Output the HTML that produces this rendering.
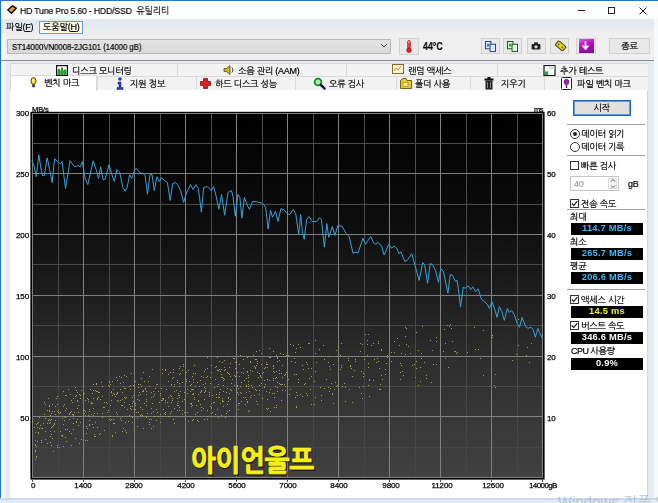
<!DOCTYPE html>
<html lang="ko"><head><meta charset="utf-8"><title>HD Tune Pro 5.60 - HDD/SSD 유틸리티</title>
<style>
*{box-sizing:border-box;margin:0;padding:0}
html,body{width:658px;height:503px;overflow:hidden;background:#efefef}
body{position:relative;font-family:"Liberation Sans","NanumGothic","Noto Sans CJK KR",sans-serif;font-size:9px;color:#000;line-height:1}
.a{position:absolute;white-space:nowrap}
.t{position:absolute;will-change:transform;white-space:nowrap;line-height:12px;height:12px;letter-spacing:-.25px;-webkit-text-stroke-width:.2px}
.btn{position:absolute;background:#e8e8e8;border:1px solid #d0d0d0}
.vb{will-change:transform;position:absolute;left:570.5px;width:72px;height:12px;background:#000;text-align:center;font-weight:bold;font-size:9.3px;line-height:10.4px;letter-spacing:.25px}
.sep{position:absolute;left:567px;width:78px;height:1px;background:#a0a0a0}
.cb{position:absolute;left:570px;width:9px;height:9px;border:1px solid #333;background:#fff}
.ax{position:absolute;font-size:8px;line-height:10px;height:10px;white-space:nowrap;letter-spacing:-.1px;will-change:transform;-webkit-text-stroke-width:.25px}
.tab{position:absolute;height:14px;background:#f2f2f2;border-left:1px solid #d9d9d9;border-top:1px solid #d9d9d9;font-size:9px;line-height:13px;white-space:nowrap}
</style></head><body>
<!-- title bar -->
<div class="a" style="left:0;top:0;width:658px;height:19px;background:#fff;border-top:1px solid #2a78c8"></div>
<svg class="a" style="left:7px;top:5px" width="10" height="9" viewBox="0 0 10 9"><path d="M0.8 5 L5.5 0.8 L9.2 3.2 L4.5 8.2 Z" fill="#e0a030" stroke="#111" stroke-width="1.5" stroke-linejoin="round"/></svg>
<div class="t" style="left:20px;top:5px;font-size:9.5px;letter-spacing:0;transform:scaleX(.915);transform-origin:0 0"><span style="letter-spacing:-.2px">HD Tune Pro 5.60 - HDD/SSD</span>&nbsp; 유틸리티</div>
<div class="a" style="left:578px;top:10px;width:7px;height:1px;background:#222"></div>
<div class="a" style="left:608px;top:7px;width:7px;height:7px;border:1px solid #222"></div>
<svg class="a" style="left:639px;top:7px" width="8" height="8" viewBox="0 0 8 8"><path d="M0.5 0.5 L7.5 7.5 M7.5 0.5 L0.5 7.5" stroke="#222" stroke-width="1" fill="none"/></svg>
<!-- menu bar -->
<div class="a" style="left:0;top:18px;width:658px;height:17px;background:linear-gradient(#fff 0,#e2e6f0 2px,#e6e9f0 8px,#efefef 17px)"></div>
<div class="t" style="left:6px;top:21px">파일(<u>F</u>)</div>
<div class="a" style="left:38.5px;top:21px;width:44.5px;height:13px;background:#fbf7e8;border:1px solid #6a9ccc"></div>
<div class="t" style="left:43px;top:21px">도움말(<u>H</u>)</div>
<!-- toolbar -->
<div class="a" style="left:7px;top:39px;width:384px;height:15px;background:linear-gradient(#e3e3e3,#d9d9d9);border:1px solid #b8b8b8"></div>
<div class="t" style="left:12px;top:40.5px;font-size:8.5px;letter-spacing:0;transform:scaleX(.91);transform-origin:0 0">ST14000VN0008-2JG101 (14000 gB)</div>
<svg class="a" style="left:380px;top:43px" width="8" height="6" viewBox="0 0 8 6"><path d="M1 1 L4 4 L7 1" stroke="#444" stroke-width="1" fill="none"/></svg>
<div class="btn" style="left:399px;top:38px;width:20px;height:17px"></div>
<svg class="a" style="left:405px;top:39.5px" width="8" height="13" viewBox="0 0 8 13"><rect x="2.6" y="0.5" width="2.8" height="9" rx="1.4" fill="#f0a0a0" stroke="#b01818" stroke-width=".8"/><rect x="3.4" y="3" width="1.2" height="7" fill="#d01010"/><circle cx="4" cy="10.3" r="2.3" fill="#e02020" stroke="#900" stroke-width=".6"/></svg>
<div class="t" style="left:423px;top:40.7px;font-weight:bold;font-size:10.2px;letter-spacing:0;transform:scaleX(.86);transform-origin:0 0">44°C</div>
<div class="btn" style="left:481px;top:38px;width:19px;height:16px"></div>
<div class="btn" style="left:503px;top:38px;width:19px;height:16px"></div>
<div class="btn" style="left:527px;top:38px;width:19px;height:16px"></div>
<div class="btn" style="left:550px;top:38px;width:19px;height:16px"></div>
<div class="btn" style="left:576px;top:38px;width:20px;height:16px"></div>
<div class="btn" style="left:609px;top:38px;width:41px;height:16px"></div>
<div class="t" style="left:609px;top:40px;width:41px;text-align:center">종료</div>
<!-- toolbar icons -->
<svg class="a" style="left:485px;top:41px" width="11" height="11" viewBox="0 0 12 12"><rect x="0.5" y="0.5" width="6" height="8" fill="#dfeaff" stroke="#1a3a78"/><rect x="5.5" y="3.5" width="6" height="8" fill="#dfeaff" stroke="#1a3a78"/><rect x="2" y="3" width="3" height="3" fill="#3a78d0"/></svg>
<svg class="a" style="left:507px;top:41px" width="11" height="11" viewBox="0 0 12 12"><rect x="0.5" y="0.5" width="6" height="8" fill="#dff5df" stroke="#1a4a1a"/><rect x="5.5" y="3.5" width="6" height="8" fill="#dff5df" stroke="#1a4a1a"/><rect x="2" y="3" width="3" height="3" fill="#3aa040"/></svg>
<svg class="a" style="left:531px;top:42px" width="10" height="8" viewBox="0 0 12 10"><rect x="0.5" y="2.5" width="11" height="7" rx="1" fill="#222"/><rect x="3.5" y="0.5" width="5" height="3" fill="#222"/><circle cx="6" cy="6" r="2" fill="#ddd"/></svg>
<svg class="a" style="left:553.5px;top:40px" width="13" height="12" viewBox="0 0 13 12"><rect x="1.5" y="3" width="10" height="5.6" rx="1.4" transform="rotate(40 6.5 6)" fill="#dcd428" stroke="#4a4608" stroke-width="1"/><circle cx="4.6" cy="4.4" r="1" fill="#7a7410"/><circle cx="8.4" cy="7.6" r="1" fill="#7a7410"/></svg>
<div class="a" style="left:579px;top:39px;width:15px;height:14px;background:linear-gradient(160deg,#d860d8 0,#b010b8 45%,#7a0a90 100%)"></div>
<svg class="a" style="left:581px;top:41px" width="9" height="10" viewBox="0 0 10 12"><path d="M5 0.5 V8.5 M1.5 5.5 L5 9.5 L8.5 5.5" stroke="#fff" stroke-width="2" fill="none"/></svg>
<!-- tab control -->
<div class="a" style="left:4.5px;top:60px;width:649.5px;height:440px;background:#e6ebf2"></div>
<div class="a" style="left:0;top:0;width:1px;height:503px;background:#1f74c8"></div>
<div class="a" style="left:1px;top:34px;width:3.5px;height:465px;background:#fcf9f8"></div>
<div class="a" style="left:1px;top:60px;width:656px;height:1px;background:#8c8c8c"></div>
<!-- tab rows -->
<div class="tab" style="left:10px;top:63px;width:167px;height:13px"></div>
<div class="tab" style="left:177px;top:63px;width:169px;height:13px"></div>
<div class="tab" style="left:346px;top:63px;width:151px;height:13px"></div>
<div class="tab" style="left:497px;top:63px;width:153px;height:13px;border-right:1px solid #d9d9d9"></div>
<div class="tab" style="left:97px;top:76px;width:99px"></div>
<div class="tab" style="left:196px;top:76px;width:99px"></div>
<div class="tab" style="left:295px;top:76px;width:101px"></div>
<div class="tab" style="left:396px;top:76px;width:74px"></div>
<div class="tab" style="left:470px;top:76px;width:74px"></div>
<div class="tab" style="left:544px;top:76px;width:106px;border-right:1px solid #d9d9d9"></div>
<!-- content panel -->
<div class="a" style="left:10px;top:90px;width:638px;height:409px;background:#fff;border-right:1px solid #d4d8dc"></div>
<div class="a" style="left:10px;top:75px;width:87px;height:16px;background:#fff;border-left:1px solid #d9d9d9;border-top:1px solid #d9d9d9;border-right:1px solid #d9d9d9"></div>
<!-- tab labels row1 -->
<div class="t" style="left:72px;top:65px">디스크 모니터링</div>
<div class="t" style="left:238px;top:65px">소음 관리 (AAM)</div>
<div class="t" style="left:408px;top:65px">랜덤 액세스</div>
<div class="t" style="left:560px;top:65px">추가 테스트</div>
<!-- tab labels row2 -->
<div class="t" style="left:44px;top:77px">벤치 마크</div>
<div class="t" style="left:130px;top:78px">지원 정보</div>
<div class="t" style="left:215px;top:78px">하드 디스크 성능</div>
<div class="t" style="left:329px;top:78px">오류 검사</div>
<div class="t" style="left:415px;top:78px">폴더 사용</div>
<div class="t" style="left:501px;top:78px">지우기</div>
<div class="t" style="left:577px;top:78px">파일 벤치 마크</div>
<!-- tab icons -->
<svg class="a" style="left:56px;top:64.5px" width="12" height="11" viewBox="0 0 12 11"><rect x="0.6" y="0.6" width="10.8" height="9.8" fill="#f4fff4" stroke="#111" stroke-width="1.2"/><rect x="1.4" y="5.5" width="9.2" height="4.3" fill="#38b048"/><rect x="2" y="4" width="2" height="5.8" fill="#2a9a38"/><rect x="5" y="2.5" width="2" height="7.3" fill="#2a9a38"/><rect x="8" y="4.5" width="2" height="5.3" fill="#2a9a38"/></svg>
<svg class="a" style="left:223px;top:65px" width="12" height="10" viewBox="0 0 12 10"><path d="M1 3.5 H3.5 L7 0.5 V9.5 L3.5 6.5 H1 Z" fill="#d8b020" stroke="#5a4a10" stroke-width=".8"/><path d="M9 2.5 Q11 5 9 7.5" stroke="#444" fill="none"/></svg>
<svg class="a" style="left:392px;top:64px" width="12" height="10" viewBox="0 0 12 10"><rect x="0.5" y="0.5" width="11" height="9" fill="#fff8e0" stroke="#8a6a20"/><path d="M2 7 L4 4 L6 6 L9 2" stroke="#d08020" fill="none"/></svg>
<svg class="a" style="left:542.5px;top:65px" width="13" height="11" viewBox="0 0 13 12"><rect x="0.5" y="0.5" width="12" height="11" fill="#fff" stroke="#111" stroke-width="1.3"/><rect x="1" y="7" width="4" height="4" fill="#2aa040"/><rect x="6" y="1" width="6" height="4" fill="#ddd"/></svg>
<svg class="a" style="left:30px;top:77px" width="7" height="11" viewBox="0 0 7 11"><ellipse cx="3.5" cy="4" rx="2.5" ry="3.4" fill="#f4e428" stroke="#4a4000" stroke-width="1"/><ellipse cx="3" cy="3.2" rx=".9" ry="1.3" fill="#fffbd0"/><rect x="2.3" y="7.4" width="2.4" height="2.8" fill="#222"/></svg>
<svg class="a" style="left:116px;top:77px" width="8" height="13" viewBox="0 0 8 13"><circle cx="4" cy="2" r="1.8" fill="#2040c0"/><path d="M2 5 H5 V10.5 H7 V12.5 H1 V10.5 H3 V7 H2 Z" fill="#2040c0" stroke="#102070" stroke-width=".5"/></svg>
<svg class="a" style="left:200px;top:78px" width="11" height="11" viewBox="0 0 11 11"><path d="M3.5 0.5 H7.5 V3.5 H10.5 V7.5 H7.5 V10.5 H3.5 V7.5 H0.5 V3.5 H3.5 Z" fill="#e02020" stroke="#801010" stroke-width=".8"/></svg>
<svg class="a" style="left:312.5px;top:77px" width="13" height="13" viewBox="0 0 13 13"><circle cx="5" cy="5" r="3.4" fill="#a8f0a8" stroke="#1a8a2a" stroke-width="1.8"/><path d="M7.8 7.8 L11.6 11.6" stroke="#141450" stroke-width="2.4" stroke-linecap="round"/></svg>
<svg class="a" style="left:400px;top:78px" width="12" height="11" viewBox="0 0 12 11"><path d="M0.5 2.5 L3 0.5 H6 L7 2.5 H11.5 V10.5 H0.5 Z" fill="#e8c830" stroke="#6a5410" stroke-width=".9"/><rect x="3" y="4.5" width="5" height="4" fill="#f8e890" stroke="#8a7420" stroke-width=".5"/></svg>
<svg class="a" style="left:484px;top:77px" width="10" height="13" viewBox="0 0 10 13"><rect x="0.5" y="1.5" width="9" height="2" fill="#111"/><rect x="3.5" y="0" width="3" height="2" fill="#111"/><rect x="1.5" y="3.5" width="7" height="9" fill="#222"/><path d="M3.5 5 V11 M6.5 5 V11" stroke="#999" stroke-width=".8"/></svg>
<svg class="a" style="left:561px;top:77px" width="11" height="13" viewBox="0 0 11 13"><rect x="0.5" y="0.5" width="10" height="12" rx="1" fill="#fff" stroke="#222"/><ellipse cx="5.5" cy="5" rx="2.4" ry="2.8" fill="#a020c0" stroke="#400860" stroke-width=".6"/><path d="M5.5 8 V11" stroke="#333" stroke-width="1.4"/></svg>
<!-- chart -->
<svg class="a" style="left:30px;top:111px" width="515" height="369" viewBox="0 0 515 369">
<defs><linearGradient id="g" x1="0" y1="0" x2="0" y2="1"><stop offset="0" stop-color="#000"/><stop offset="0.3" stop-color="#0d0d0d"/><stop offset="0.7" stop-color="#2f2f2f"/><stop offset="1" stop-color="#414141"/></linearGradient>
<linearGradient id="gm" x1="0" y1="0" x2="0" y2="1"><stop offset="0" stop-color="#4e4e4e"/><stop offset="1" stop-color="#454545"/></linearGradient></defs>
<rect x="0.4" y="0.8" width="514.2" height="367.8" fill="#000"/><rect x="2.5" y="2.0" width="510.3" height="364.6" fill="url(#g)"/>
<g stroke-width="1"><g><rect x="28.00" y="2.0" width="1" height="364.6" fill="url(#gm)"/><rect x="79.00" y="2.0" width="1" height="364.6" fill="url(#gm)"/><rect x="130.00" y="2.0" width="1" height="364.6" fill="url(#gm)"/><rect x="181.00" y="2.0" width="1" height="364.6" fill="url(#gm)"/><rect x="232.00" y="2.0" width="1" height="364.6" fill="url(#gm)"/><rect x="283.00" y="2.0" width="1" height="364.6" fill="url(#gm)"/><rect x="334.00" y="2.0" width="1" height="364.6" fill="url(#gm)"/><rect x="385.00" y="2.0" width="1" height="364.6" fill="url(#gm)"/><rect x="436.00" y="2.0" width="1" height="364.6" fill="url(#gm)"/><rect x="487.00" y="2.0" width="1" height="364.6" fill="url(#gm)"/><line x1="2.5" y1="32.50" x2="512.8" y2="32.50" stroke="#4d4d4d"/><line x1="2.5" y1="93.50" x2="512.8" y2="93.50" stroke="#4b4b4b"/><line x1="2.5" y1="153.50" x2="512.8" y2="153.50" stroke="#4a4a4a"/><line x1="2.5" y1="214.50" x2="512.8" y2="214.50" stroke="#484848"/><line x1="2.5" y1="275.50" x2="512.8" y2="275.50" stroke="#474747"/><line x1="2.5" y1="336.50" x2="512.8" y2="336.50" stroke="#454545"/></g><g stroke="#808080"><line x1="2.50" y1="2.0" x2="2.50" y2="366.6"/><line x1="53.50" y1="2.0" x2="53.50" y2="366.6"/><line x1="104.50" y1="2.0" x2="104.50" y2="366.6"/><line x1="155.50" y1="2.0" x2="155.50" y2="366.6"/><line x1="206.50" y1="2.0" x2="206.50" y2="366.6"/><line x1="257.50" y1="2.0" x2="257.50" y2="366.6"/><line x1="308.50" y1="2.0" x2="308.50" y2="366.6"/><line x1="359.50" y1="2.0" x2="359.50" y2="366.6"/><line x1="410.50" y1="2.0" x2="410.50" y2="366.6"/><line x1="461.50" y1="2.0" x2="461.50" y2="366.6"/><line x1="512.50" y1="2.0" x2="512.50" y2="366.6"/><line x1="2.5" y1="2.50" x2="512.8" y2="2.50"/><line x1="2.5" y1="62.50" x2="512.8" y2="62.50"/><line x1="2.5" y1="123.50" x2="512.8" y2="123.50"/><line x1="2.5" y1="184.50" x2="512.8" y2="184.50"/><line x1="2.5" y1="245.50" x2="512.8" y2="245.50"/><line x1="2.5" y1="305.50" x2="512.8" y2="305.50"/><line x1="2.5" y1="366.50" x2="512.8" y2="366.50"/></g></g>
<g fill="#b0a84a" opacity=".9"><rect x="119" y="313" width="1" height="1"/><rect x="122" y="292" width="1" height="1"/><rect x="50" y="311" width="1" height="1"/><rect x="207" y="261" width="1" height="1"/><rect x="25" y="303" width="1" height="1"/><rect x="255" y="275" width="1" height="1"/><rect x="43" y="307" width="1" height="1"/><rect x="17" y="299" width="1" height="1"/><rect x="10" y="314" width="1" height="1"/><rect x="219" y="280" width="1" height="1"/><rect x="131" y="277" width="1" height="1"/><rect x="259" y="283" width="1" height="1"/><rect x="83" y="282" width="1" height="1"/><rect x="20" y="320" width="1" height="1"/><rect x="102" y="286" width="1" height="1"/><rect x="56" y="315" width="1" height="1"/><rect x="105" y="298" width="1" height="1"/><rect x="203" y="247" width="1" height="1"/><rect x="88" y="290" width="1" height="1"/><rect x="66" y="273" width="1" height="1"/><rect x="208" y="277" width="1" height="1"/><rect x="117" y="302" width="1" height="1"/><rect x="36" y="284" width="1" height="1"/><rect x="111" y="275" width="1" height="1"/><rect x="252" y="273" width="1" height="1"/><rect x="56" y="322" width="1" height="1"/><rect x="168" y="310" width="1" height="1"/><rect x="57" y="317" width="1" height="1"/><rect x="87" y="269" width="1" height="1"/><rect x="25" y="295" width="1" height="1"/><rect x="157" y="278" width="1" height="1"/><rect x="249" y="272" width="1" height="1"/><rect x="226" y="248" width="1" height="1"/><rect x="236" y="251" width="1" height="1"/><rect x="193" y="280" width="1" height="1"/><rect x="230" y="265" width="1" height="1"/><rect x="29" y="336" width="1" height="1"/><rect x="64" y="302" width="1" height="1"/><rect x="156" y="261" width="1" height="1"/><rect x="188" y="259" width="1" height="1"/><rect x="146" y="279" width="1" height="1"/><rect x="239" y="237" width="1" height="1"/><rect x="71" y="271" width="1" height="1"/><rect x="47" y="308" width="1" height="1"/><rect x="36" y="330" width="1" height="1"/><rect x="255" y="275" width="1" height="1"/><rect x="38" y="278" width="1" height="1"/><rect x="237" y="268" width="1" height="1"/><rect x="166" y="294" width="1" height="1"/><rect x="84" y="283" width="1" height="1"/><rect x="192" y="289" width="1" height="1"/><rect x="207" y="274" width="1" height="1"/><rect x="234" y="276" width="1" height="1"/><rect x="225" y="278" width="1" height="1"/><rect x="101" y="298" width="1" height="1"/><rect x="23" y="340" width="1" height="1"/><rect x="229" y="274" width="1" height="1"/><rect x="152" y="303" width="1" height="1"/><rect x="24" y="300" width="1" height="1"/><rect x="126" y="298" width="1" height="1"/><rect x="130" y="311" width="1" height="1"/><rect x="68" y="286" width="1" height="1"/><rect x="177" y="257" width="1" height="1"/><rect x="236" y="280" width="1" height="1"/><rect x="86" y="283" width="1" height="1"/><rect x="210" y="281" width="1" height="1"/><rect x="152" y="259" width="1" height="1"/><rect x="130" y="303" width="1" height="1"/><rect x="247" y="246" width="1" height="1"/><rect x="118" y="270" width="1" height="1"/><rect x="109" y="289" width="1" height="1"/><rect x="83" y="308" width="1" height="1"/><rect x="21" y="334" width="1" height="1"/><rect x="13" y="312" width="1" height="1"/><rect x="206" y="250" width="1" height="1"/><rect x="119" y="308" width="1" height="1"/><rect x="63" y="273" width="1" height="1"/><rect x="164" y="288" width="1" height="1"/><rect x="171" y="299" width="1" height="1"/><rect x="53" y="283" width="1" height="1"/><rect x="5" y="334" width="1" height="1"/><rect x="48" y="294" width="1" height="1"/><rect x="182" y="284" width="1" height="1"/><rect x="197" y="293" width="1" height="1"/><rect x="236" y="297" width="1" height="1"/><rect x="188" y="273" width="1" height="1"/><rect x="163" y="278" width="1" height="1"/><rect x="229" y="283" width="1" height="1"/><rect x="170" y="293" width="1" height="1"/><rect x="213" y="286" width="1" height="1"/><rect x="57" y="329" width="1" height="1"/><rect x="141" y="291" width="1" height="1"/><rect x="223" y="244" width="1" height="1"/><rect x="116" y="305" width="1" height="1"/><rect x="128" y="305" width="1" height="1"/><rect x="19" y="299" width="1" height="1"/><rect x="205" y="251" width="1" height="1"/><rect x="135" y="301" width="1" height="1"/><rect x="246" y="296" width="1" height="1"/><rect x="24" y="312" width="1" height="1"/><rect x="77" y="301" width="1" height="1"/><rect x="220" y="259" width="1" height="1"/><rect x="100" y="295" width="1" height="1"/><rect x="221" y="274" width="1" height="1"/><rect x="54" y="302" width="1" height="1"/><rect x="158" y="310" width="1" height="1"/><rect x="135" y="303" width="1" height="1"/><rect x="147" y="294" width="1" height="1"/><rect x="19" y="308" width="1" height="1"/><rect x="249" y="259" width="1" height="1"/><rect x="35" y="326" width="1" height="1"/><rect x="234" y="257" width="1" height="1"/><rect x="51" y="328" width="1" height="1"/><rect x="35" y="284" width="1" height="1"/><rect x="61" y="291" width="1" height="1"/><rect x="162" y="294" width="1" height="1"/><rect x="34" y="293" width="1" height="1"/><rect x="53" y="298" width="1" height="1"/><rect x="99" y="293" width="1" height="1"/><rect x="43" y="312" width="1" height="1"/><rect x="167" y="301" width="1" height="1"/><rect x="160" y="280" width="1" height="1"/><rect x="211" y="261" width="1" height="1"/><rect x="240" y="300" width="1" height="1"/><rect x="231" y="253" width="1" height="1"/><rect x="189" y="250" width="1" height="1"/><rect x="217" y="290" width="1" height="1"/><rect x="35" y="318" width="1" height="1"/><rect x="7" y="330" width="1" height="1"/><rect x="237" y="256" width="1" height="1"/><rect x="198" y="286" width="1" height="1"/><rect x="51" y="279" width="1" height="1"/><rect x="12" y="317" width="1" height="1"/><rect x="149" y="263" width="1" height="1"/><rect x="55" y="329" width="1" height="1"/><rect x="27" y="336" width="1" height="1"/><rect x="121" y="281" width="1" height="1"/><rect x="135" y="291" width="1" height="1"/><rect x="5" y="321" width="1" height="1"/><rect x="119" y="275" width="1" height="1"/><rect x="45" y="276" width="1" height="1"/><rect x="232" y="287" width="1" height="1"/><rect x="164" y="286" width="1" height="1"/><rect x="132" y="287" width="1" height="1"/><rect x="237" y="288" width="1" height="1"/><rect x="107" y="307" width="1" height="1"/><rect x="200" y="278" width="1" height="1"/><rect x="20" y="311" width="1" height="1"/><rect x="5" y="329" width="1" height="1"/><rect x="163" y="308" width="1" height="1"/><rect x="174" y="288" width="1" height="1"/><rect x="149" y="275" width="1" height="1"/><rect x="260" y="278" width="1" height="1"/><rect x="199" y="263" width="1" height="1"/><rect x="193" y="269" width="1" height="1"/><rect x="15" y="307" width="1" height="1"/><rect x="27" y="334" width="1" height="1"/><rect x="144" y="312" width="1" height="1"/><rect x="149" y="296" width="1" height="1"/><rect x="22" y="327" width="1" height="1"/><rect x="14" y="305" width="1" height="1"/><rect x="46" y="311" width="1" height="1"/><rect x="17" y="312" width="1" height="1"/><rect x="156" y="268" width="1" height="1"/><rect x="171" y="265" width="1" height="1"/><rect x="187" y="246" width="1" height="1"/><rect x="65" y="279" width="1" height="1"/><rect x="197" y="300" width="1" height="1"/><rect x="195" y="306" width="1" height="1"/><rect x="246" y="294" width="1" height="1"/><rect x="113" y="317" width="1" height="1"/><rect x="65" y="325" width="1" height="1"/><rect x="188" y="306" width="1" height="1"/><rect x="213" y="248" width="1" height="1"/><rect x="163" y="262" width="1" height="1"/><rect x="15" y="293" width="1" height="1"/><rect x="116" y="280" width="1" height="1"/><rect x="152" y="299" width="1" height="1"/><rect x="139" y="305" width="1" height="1"/><rect x="64" y="323" width="1" height="1"/><rect x="204" y="264" width="1" height="1"/><rect x="72" y="302" width="1" height="1"/><rect x="165" y="262" width="1" height="1"/><rect x="255" y="263" width="1" height="1"/><rect x="18" y="309" width="1" height="1"/><rect x="163" y="283" width="1" height="1"/><rect x="21" y="323" width="1" height="1"/><rect x="144" y="275" width="1" height="1"/><rect x="125" y="277" width="1" height="1"/><rect x="194" y="249" width="1" height="1"/><rect x="211" y="290" width="1" height="1"/><rect x="57" y="287" width="1" height="1"/><rect x="211" y="282" width="1" height="1"/><rect x="257" y="269" width="1" height="1"/><rect x="194" y="268" width="1" height="1"/><rect x="27" y="285" width="1" height="1"/><rect x="148" y="294" width="1" height="1"/><rect x="79" y="275" width="1" height="1"/><rect x="173" y="266" width="1" height="1"/><rect x="189" y="258" width="1" height="1"/><rect x="94" y="277" width="1" height="1"/><rect x="185" y="303" width="1" height="1"/><rect x="245" y="275" width="1" height="1"/><rect x="81" y="289" width="1" height="1"/><rect x="243" y="255" width="1" height="1"/><rect x="96" y="286" width="1" height="1"/><rect x="102" y="295" width="1" height="1"/><rect x="208" y="294" width="1" height="1"/><rect x="147" y="299" width="1" height="1"/><rect x="229" y="239" width="1" height="1"/><rect x="135" y="289" width="1" height="1"/><rect x="251" y="262" width="1" height="1"/><rect x="143" y="258" width="1" height="1"/><rect x="192" y="266" width="1" height="1"/><rect x="39" y="303" width="1" height="1"/><rect x="59" y="309" width="1" height="1"/><rect x="104" y="319" width="1" height="1"/><rect x="175" y="280" width="1" height="1"/><rect x="188" y="286" width="1" height="1"/><rect x="215" y="293" width="1" height="1"/><rect x="217" y="291" width="1" height="1"/><rect x="137" y="291" width="1" height="1"/><rect x="110" y="304" width="1" height="1"/><rect x="258" y="244" width="1" height="1"/><rect x="55" y="289" width="1" height="1"/><rect x="252" y="254" width="1" height="1"/><rect x="32" y="324" width="1" height="1"/><rect x="48" y="301" width="1" height="1"/><rect x="153" y="255" width="1" height="1"/><rect x="50" y="287" width="1" height="1"/><rect x="187" y="259" width="1" height="1"/><rect x="50" y="284" width="1" height="1"/><rect x="197" y="277" width="1" height="1"/><rect x="213" y="257" width="1" height="1"/><rect x="231" y="266" width="1" height="1"/><rect x="249" y="249" width="1" height="1"/><rect x="15" y="320" width="1" height="1"/><rect x="138" y="270" width="1" height="1"/><rect x="257" y="241" width="1" height="1"/><rect x="124" y="305" width="1" height="1"/><rect x="186" y="255" width="1" height="1"/><rect x="42" y="291" width="1" height="1"/><rect x="226" y="279" width="1" height="1"/><rect x="258" y="268" width="1" height="1"/><rect x="41" y="300" width="1" height="1"/><rect x="220" y="250" width="1" height="1"/><rect x="187" y="275" width="1" height="1"/><rect x="123" y="300" width="1" height="1"/><rect x="80" y="305" width="1" height="1"/><rect x="25" y="303" width="1" height="1"/><rect x="138" y="305" width="1" height="1"/><rect x="82" y="270" width="1" height="1"/><rect x="81" y="308" width="1" height="1"/><rect x="95" y="277" width="1" height="1"/><rect x="121" y="302" width="1" height="1"/><rect x="5" y="333" width="1" height="1"/><rect x="63" y="297" width="1" height="1"/><rect x="5" y="321" width="1" height="1"/><rect x="161" y="273" width="1" height="1"/><rect x="141" y="274" width="1" height="1"/><rect x="103" y="274" width="1" height="1"/><rect x="191" y="304" width="1" height="1"/><rect x="147" y="287" width="1" height="1"/><rect x="26" y="287" width="1" height="1"/><rect x="177" y="265" width="1" height="1"/><rect x="218" y="245" width="1" height="1"/><rect x="60" y="278" width="1" height="1"/><rect x="107" y="315" width="1" height="1"/><rect x="112" y="298" width="1" height="1"/><rect x="200" y="265" width="1" height="1"/><rect x="108" y="284" width="1" height="1"/><rect x="183" y="291" width="1" height="1"/><rect x="159" y="270" width="1" height="1"/><rect x="90" y="278" width="1" height="1"/><rect x="133" y="298" width="1" height="1"/><rect x="43" y="318" width="1" height="1"/><rect x="93" y="271" width="1" height="1"/><rect x="186" y="283" width="1" height="1"/><rect x="218" y="300" width="1" height="1"/><rect x="164" y="254" width="1" height="1"/><rect x="65" y="311" width="1" height="1"/><rect x="87" y="289" width="1" height="1"/><rect x="34" y="309" width="1" height="1"/><rect x="142" y="287" width="1" height="1"/><rect x="70" y="322" width="1" height="1"/><rect x="157" y="301" width="1" height="1"/><rect x="76" y="291" width="1" height="1"/><rect x="216" y="275" width="1" height="1"/><rect x="22" y="293" width="1" height="1"/><rect x="257" y="265" width="1" height="1"/><rect x="175" y="277" width="1" height="1"/><rect x="209" y="253" width="1" height="1"/><rect x="123" y="280" width="1" height="1"/><rect x="149" y="284" width="1" height="1"/><rect x="70" y="288" width="1" height="1"/><rect x="168" y="290" width="1" height="1"/><rect x="39" y="308" width="1" height="1"/><rect x="108" y="301" width="1" height="1"/><rect x="198" y="290" width="1" height="1"/><rect x="218" y="266" width="1" height="1"/><rect x="148" y="284" width="1" height="1"/><rect x="114" y="270" width="1" height="1"/><rect x="189" y="286" width="1" height="1"/><rect x="196" y="281" width="1" height="1"/><rect x="20" y="309" width="1" height="1"/><rect x="132" y="258" width="1" height="1"/><rect x="181" y="261" width="1" height="1"/><rect x="81" y="280" width="1" height="1"/><rect x="20" y="331" width="1" height="1"/><rect x="226" y="290" width="1" height="1"/><rect x="59" y="314" width="1" height="1"/><rect x="27" y="300" width="1" height="1"/><rect x="247" y="250" width="1" height="1"/><rect x="79" y="270" width="1" height="1"/><rect x="233" y="261" width="1" height="1"/><rect x="153" y="253" width="1" height="1"/><rect x="234" y="269" width="1" height="1"/><rect x="243" y="257" width="1" height="1"/><rect x="78" y="299" width="1" height="1"/><rect x="218" y="270" width="1" height="1"/><rect x="46" y="310" width="1" height="1"/><rect x="165" y="303" width="1" height="1"/><rect x="15" y="328" width="1" height="1"/><rect x="83" y="312" width="1" height="1"/><rect x="37" y="318" width="1" height="1"/><rect x="22" y="300" width="1" height="1"/><rect x="185" y="256" width="1" height="1"/><rect x="63" y="304" width="1" height="1"/><rect x="173" y="273" width="1" height="1"/><rect x="80" y="294" width="1" height="1"/><rect x="167" y="309" width="1" height="1"/><rect x="116" y="290" width="1" height="1"/><rect x="14" y="303" width="1" height="1"/><rect x="67" y="280" width="1" height="1"/><rect x="197" y="261" width="1" height="1"/><rect x="143" y="308" width="1" height="1"/><rect x="257" y="263" width="1" height="1"/><rect x="196" y="302" width="1" height="1"/><rect x="131" y="289" width="1" height="1"/><rect x="168" y="289" width="1" height="1"/><rect x="204" y="274" width="1" height="1"/><rect x="220" y="286" width="1" height="1"/><rect x="47" y="297" width="1" height="1"/><rect x="63" y="316" width="1" height="1"/><rect x="205" y="265" width="1" height="1"/><rect x="59" y="300" width="1" height="1"/><rect x="11" y="329" width="1" height="1"/><rect x="150" y="262" width="1" height="1"/><rect x="7" y="316" width="1" height="1"/><rect x="116" y="306" width="1" height="1"/><rect x="21" y="316" width="1" height="1"/><rect x="206" y="251" width="1" height="1"/><rect x="82" y="284" width="1" height="1"/><rect x="162" y="265" width="1" height="1"/><rect x="154" y="301" width="1" height="1"/><rect x="46" y="284" width="1" height="1"/><rect x="180" y="272" width="1" height="1"/><rect x="108" y="273" width="1" height="1"/><rect x="252" y="266" width="1" height="1"/><rect x="198" y="262" width="1" height="1"/><rect x="194" y="259" width="1" height="1"/><rect x="232" y="262" width="1" height="1"/><rect x="79" y="271" width="1" height="1"/><rect x="11" y="331" width="1" height="1"/><rect x="61" y="303" width="1" height="1"/><rect x="64" y="325" width="1" height="1"/><rect x="96" y="321" width="1" height="1"/><rect x="160" y="274" width="1" height="1"/><rect x="170" y="269" width="1" height="1"/><rect x="181" y="292" width="1" height="1"/><rect x="121" y="308" width="1" height="1"/><rect x="100" y="278" width="1" height="1"/><rect x="49" y="283" width="1" height="1"/><rect x="55" y="300" width="1" height="1"/><rect x="82" y="325" width="1" height="1"/><rect x="177" y="265" width="1" height="1"/><rect x="21" y="302" width="1" height="1"/><rect x="7" y="305" width="1" height="1"/><rect x="103" y="290" width="1" height="1"/><rect x="95" y="319" width="1" height="1"/><rect x="95" y="311" width="1" height="1"/><rect x="7" y="312" width="1" height="1"/><rect x="23" y="314" width="1" height="1"/><rect x="136" y="278" width="1" height="1"/><rect x="63" y="279" width="1" height="1"/><rect x="156" y="270" width="1" height="1"/><rect x="111" y="267" width="1" height="1"/><rect x="184" y="291" width="1" height="1"/><rect x="174" y="260" width="1" height="1"/><rect x="74" y="291" width="1" height="1"/><rect x="225" y="257" width="1" height="1"/><rect x="91" y="266" width="1" height="1"/><rect x="8" y="322" width="1" height="1"/><rect x="211" y="271" width="1" height="1"/><rect x="239" y="281" width="1" height="1"/><rect x="174" y="281" width="1" height="1"/><rect x="165" y="275" width="1" height="1"/><rect x="103" y="284" width="1" height="1"/><rect x="87" y="281" width="1" height="1"/><rect x="43" y="303" width="1" height="1"/><rect x="45" y="285" width="1" height="1"/><rect x="90" y="272" width="1" height="1"/><rect x="152" y="290" width="1" height="1"/><rect x="8" y="311" width="1" height="1"/><rect x="18" y="287" width="1" height="1"/><rect x="130" y="284" width="1" height="1"/><rect x="86" y="266" width="1" height="1"/><rect x="92" y="288" width="1" height="1"/><rect x="174" y="276" width="1" height="1"/><rect x="161" y="278" width="1" height="1"/><rect x="245" y="275" width="1" height="1"/><rect x="108" y="276" width="1" height="1"/><rect x="216" y="281" width="1" height="1"/><rect x="12" y="317" width="1" height="1"/><rect x="82" y="324" width="1" height="1"/><rect x="41" y="289" width="1" height="1"/><rect x="177" y="246" width="1" height="1"/><rect x="142" y="267" width="1" height="1"/><rect x="129" y="291" width="1" height="1"/><rect x="147" y="292" width="1" height="1"/><rect x="91" y="294" width="1" height="1"/><rect x="181" y="302" width="1" height="1"/><rect x="43" y="304" width="1" height="1"/><rect x="147" y="269" width="1" height="1"/><rect x="195" y="258" width="1" height="1"/><rect x="66" y="280" width="1" height="1"/><rect x="135" y="258" width="1" height="1"/><rect x="20" y="325" width="1" height="1"/><rect x="31" y="324" width="1" height="1"/><rect x="126" y="309" width="1" height="1"/><rect x="226" y="254" width="1" height="1"/><rect x="133" y="288" width="1" height="1"/><rect x="67" y="288" width="1" height="1"/><rect x="198" y="287" width="1" height="1"/><rect x="111" y="303" width="1" height="1"/><rect x="209" y="265" width="1" height="1"/><rect x="175" y="258" width="1" height="1"/><rect x="6" y="346" width="1" height="1"/><rect x="252" y="279" width="1" height="1"/><rect x="110" y="283" width="1" height="1"/><rect x="243" y="260" width="1" height="1"/><rect x="33" y="295" width="1" height="1"/><rect x="191" y="258" width="1" height="1"/><rect x="9" y="317" width="1" height="1"/><rect x="98" y="310" width="1" height="1"/><rect x="218" y="264" width="1" height="1"/><rect x="161" y="292" width="1" height="1"/><rect x="181" y="296" width="1" height="1"/><rect x="40" y="283" width="1" height="1"/><rect x="243" y="267" width="1" height="1"/><rect x="33" y="280" width="1" height="1"/><rect x="148" y="290" width="1" height="1"/><rect x="73" y="296" width="1" height="1"/><rect x="96" y="265" width="1" height="1"/><rect x="19" y="295" width="1" height="1"/><rect x="49" y="332" width="1" height="1"/><rect x="54" y="299" width="1" height="1"/><rect x="210" y="244" width="1" height="1"/><rect x="144" y="280" width="1" height="1"/><rect x="244" y="282" width="1" height="1"/><rect x="217" y="246" width="1" height="1"/><rect x="46" y="279" width="1" height="1"/><rect x="95" y="287" width="1" height="1"/><rect x="5" y="348" width="1" height="1"/><rect x="5" y="339" width="1" height="1"/><rect x="206" y="279" width="1" height="1"/><rect x="216" y="274" width="1" height="1"/><rect x="247" y="280" width="1" height="1"/><rect x="67" y="287" width="1" height="1"/><rect x="61" y="292" width="1" height="1"/><rect x="171" y="279" width="1" height="1"/><rect x="93" y="317" width="1" height="1"/><rect x="85" y="285" width="1" height="1"/><rect x="193" y="290" width="1" height="1"/><rect x="143" y="261" width="1" height="1"/><rect x="39" y="302" width="1" height="1"/><rect x="4" y="316" width="1" height="1"/><rect x="85" y="321" width="1" height="1"/><rect x="55" y="304" width="1" height="1"/><rect x="30" y="320" width="1" height="1"/><rect x="59" y="313" width="1" height="1"/><rect x="48" y="314" width="1" height="1"/><rect x="247" y="247" width="1" height="1"/><rect x="94" y="286" width="1" height="1"/><rect x="100" y="274" width="1" height="1"/><rect x="161" y="295" width="1" height="1"/><rect x="132" y="262" width="1" height="1"/><rect x="218" y="275" width="1" height="1"/><rect x="110" y="273" width="1" height="1"/><rect x="157" y="282" width="1" height="1"/><rect x="10" y="314" width="1" height="1"/><rect x="155" y="308" width="1" height="1"/><rect x="41" y="334" width="1" height="1"/><rect x="192" y="290" width="1" height="1"/><rect x="257" y="290" width="1" height="1"/><rect x="35" y="299" width="1" height="1"/><rect x="219" y="299" width="1" height="1"/><rect x="216" y="288" width="1" height="1"/><rect x="19" y="312" width="1" height="1"/><rect x="210" y="275" width="1" height="1"/><rect x="225" y="256" width="1" height="1"/><rect x="168" y="283" width="1" height="1"/><rect x="205" y="257" width="1" height="1"/><rect x="208" y="283" width="1" height="1"/><rect x="236" y="253" width="1" height="1"/><rect x="28" y="301" width="1" height="1"/><rect x="225" y="248" width="1" height="1"/><rect x="102" y="306" width="1" height="1"/><rect x="21" y="308" width="1" height="1"/><rect x="228" y="266" width="1" height="1"/><rect x="113" y="279" width="1" height="1"/><rect x="83" y="282" width="1" height="1"/><rect x="158" y="259" width="1" height="1"/><rect x="181" y="254" width="1" height="1"/><rect x="32" y="307" width="1" height="1"/><rect x="53" y="315" width="1" height="1"/><rect x="95" y="287" width="1" height="1"/><rect x="40" y="301" width="1" height="1"/><rect x="214" y="269" width="1" height="1"/><rect x="133" y="287" width="1" height="1"/><rect x="63" y="287" width="1" height="1"/><rect x="227" y="293" width="1" height="1"/><rect x="177" y="305" width="1" height="1"/><rect x="102" y="292" width="1" height="1"/><rect x="19" y="300" width="1" height="1"/><rect x="116" y="288" width="1" height="1"/><rect x="175" y="272" width="1" height="1"/><rect x="36" y="297" width="1" height="1"/><rect x="90" y="307" width="1" height="1"/><rect x="143" y="308" width="1" height="1"/><rect x="25" y="303" width="1" height="1"/><rect x="189" y="283" width="1" height="1"/><rect x="247" y="276" width="1" height="1"/><rect x="123" y="285" width="1" height="1"/><rect x="84" y="312" width="1" height="1"/><rect x="254" y="273" width="1" height="1"/><rect x="170" y="281" width="1" height="1"/><rect x="121" y="297" width="1" height="1"/><rect x="58" y="288" width="1" height="1"/><rect x="39" y="320" width="1" height="1"/><rect x="24" y="320" width="1" height="1"/><rect x="163" y="282" width="1" height="1"/><rect x="191" y="263" width="1" height="1"/><rect x="6" y="345" width="1" height="1"/><rect x="8" y="321" width="1" height="1"/><rect x="140" y="302" width="1" height="1"/><rect x="80" y="273" width="1" height="1"/><rect x="149" y="257" width="1" height="1"/><rect x="134" y="302" width="1" height="1"/><rect x="66" y="272" width="1" height="1"/><rect x="58" y="304" width="1" height="1"/><rect x="121" y="286" width="1" height="1"/><rect x="42" y="303" width="1" height="1"/><rect x="160" y="292" width="1" height="1"/><rect x="5" y="340" width="1" height="1"/><rect x="191" y="266" width="1" height="1"/><rect x="9" y="306" width="1" height="1"/><rect x="251" y="289" width="1" height="1"/><rect x="14" y="291" width="1" height="1"/><rect x="69" y="323" width="1" height="1"/><rect x="87" y="303" width="1" height="1"/><rect x="231" y="272" width="1" height="1"/><rect x="235" y="256" width="1" height="1"/><rect x="193" y="267" width="1" height="1"/><rect x="113" y="280" width="1" height="1"/><rect x="113" y="261" width="1" height="1"/><rect x="218" y="273" width="1" height="1"/><rect x="143" y="266" width="1" height="1"/><rect x="28" y="299" width="1" height="1"/><rect x="127" y="301" width="1" height="1"/><rect x="128" y="280" width="1" height="1"/><rect x="251" y="273" width="1" height="1"/><rect x="250" y="273" width="1" height="1"/><rect x="97" y="298" width="1" height="1"/><rect x="154" y="281" width="1" height="1"/><rect x="135" y="259" width="1" height="1"/><rect x="67" y="316" width="1" height="1"/><rect x="112" y="280" width="1" height="1"/><rect x="177" y="308" width="1" height="1"/><rect x="217" y="260" width="1" height="1"/><rect x="213" y="262" width="1" height="1"/><rect x="199" y="282" width="1" height="1"/><rect x="144" y="273" width="1" height="1"/><rect x="243" y="254" width="1" height="1"/><rect x="192" y="287" width="1" height="1"/><rect x="256" y="261" width="1" height="1"/><rect x="116" y="283" width="1" height="1"/><rect x="115" y="278" width="1" height="1"/><rect x="192" y="251" width="1" height="1"/><rect x="217" y="261" width="1" height="1"/><rect x="33" y="335" width="1" height="1"/><rect x="147" y="271" width="1" height="1"/><rect x="140" y="284" width="1" height="1"/><rect x="124" y="283" width="1" height="1"/><rect x="99" y="304" width="1" height="1"/><rect x="180" y="295" width="1" height="1"/><rect x="29" y="302" width="1" height="1"/><rect x="54" y="282" width="1" height="1"/><rect x="92" y="294" width="1" height="1"/><rect x="102" y="311" width="1" height="1"/><rect x="94" y="291" width="1" height="1"/><rect x="255" y="279" width="1" height="1"/><rect x="62" y="313" width="1" height="1"/><rect x="150" y="255" width="1" height="1"/><rect x="215" y="286" width="1" height="1"/><rect x="114" y="292" width="1" height="1"/><rect x="254" y="264" width="1" height="1"/><rect x="62" y="282" width="1" height="1"/><rect x="221" y="284" width="1" height="1"/><rect x="149" y="272" width="1" height="1"/><rect x="41" y="322" width="1" height="1"/><rect x="27" y="293" width="1" height="1"/><rect x="140" y="261" width="1" height="1"/><rect x="199" y="299" width="1" height="1"/><rect x="240" y="278" width="1" height="1"/><rect x="187" y="298" width="1" height="1"/><rect x="190" y="260" width="1" height="1"/><rect x="7" y="305" width="1" height="1"/><rect x="78" y="274" width="1" height="1"/><rect x="127" y="273" width="1" height="1"/><rect x="74" y="319" width="1" height="1"/><rect x="43" y="318" width="1" height="1"/><rect x="142" y="289" width="1" height="1"/><rect x="239" y="246" width="1" height="1"/><rect x="244" y="286" width="1" height="1"/><rect x="62" y="292" width="1" height="1"/><rect x="190" y="278" width="1" height="1"/><rect x="92" y="320" width="1" height="1"/><rect x="30" y="301" width="1" height="1"/><rect x="235" y="273" width="1" height="1"/><rect x="33" y="313" width="1" height="1"/><rect x="18" y="287" width="1" height="1"/><rect x="149" y="299" width="1" height="1"/><rect x="204" y="247" width="1" height="1"/><rect x="138" y="286" width="1" height="1"/><rect x="93" y="275" width="1" height="1"/><rect x="184" y="276" width="1" height="1"/><rect x="22" y="315" width="1" height="1"/><rect x="253" y="243" width="1" height="1"/><rect x="79" y="308" width="1" height="1"/><rect x="244" y="296" width="1" height="1"/><rect x="224" y="255" width="1" height="1"/><rect x="154" y="288" width="1" height="1"/><rect x="243" y="269" width="1" height="1"/><rect x="250" y="242" width="1" height="1"/><rect x="226" y="240" width="1" height="1"/><rect x="216" y="275" width="1" height="1"/><rect x="197" y="245" width="1" height="1"/><rect x="207" y="281" width="1" height="1"/><rect x="89" y="265" width="1" height="1"/><rect x="201" y="279" width="1" height="1"/><rect x="138" y="295" width="1" height="1"/><rect x="119" y="311" width="1" height="1"/><rect x="47" y="289" width="1" height="1"/><rect x="126" y="273" width="1" height="1"/><rect x="171" y="280" width="1" height="1"/><rect x="68" y="281" width="1" height="1"/><rect x="80" y="309" width="1" height="1"/><rect x="176" y="266" width="1" height="1"/><rect x="199" y="256" width="1" height="1"/><rect x="109" y="281" width="1" height="1"/><rect x="237" y="253" width="1" height="1"/><rect x="206" y="277" width="1" height="1"/><rect x="100" y="297" width="1" height="1"/><rect x="193" y="295" width="1" height="1"/><rect x="6" y="313" width="1" height="1"/><rect x="19" y="294" width="1" height="1"/><rect x="229" y="279" width="1" height="1"/><rect x="242" y="282" width="1" height="1"/><rect x="246" y="244" width="1" height="1"/><rect x="177" y="299" width="1" height="1"/><rect x="119" y="265" width="1" height="1"/><rect x="72" y="275" width="1" height="1"/><rect x="92" y="281" width="1" height="1"/><rect x="49" y="305" width="1" height="1"/><rect x="141" y="300" width="1" height="1"/><rect x="138" y="263" width="1" height="1"/><rect x="22" y="327" width="1" height="1"/><rect x="240" y="246" width="1" height="1"/><rect x="87" y="282" width="1" height="1"/><rect x="207" y="275" width="1" height="1"/><rect x="220" y="251" width="1" height="1"/><rect x="246" y="260" width="1" height="1"/><rect x="105" y="270" width="1" height="1"/><rect x="47" y="281" width="1" height="1"/><rect x="59" y="305" width="1" height="1"/><rect x="122" y="258" width="1" height="1"/><rect x="81" y="281" width="1" height="1"/><rect x="162" y="278" width="1" height="1"/><rect x="163" y="271" width="1" height="1"/><rect x="230" y="264" width="1" height="1"/><rect x="141" y="273" width="1" height="1"/><rect x="238" y="297" width="1" height="1"/><rect x="222" y="260" width="1" height="1"/><rect x="256" y="244" width="1" height="1"/><rect x="189" y="281" width="1" height="1"/><rect x="43" y="287" width="1" height="1"/><rect x="179" y="281" width="1" height="1"/><rect x="130" y="282" width="1" height="1"/><rect x="2" y="310" width="1" height="1"/><rect x="150" y="280" width="1" height="1"/><rect x="25" y="309" width="1" height="1"/><rect x="167" y="271" width="1" height="1"/><rect x="24" y="313" width="1" height="1"/><rect x="208" y="298" width="1" height="1"/><rect x="132" y="289" width="1" height="1"/><rect x="246" y="266" width="1" height="1"/><rect x="77" y="292" width="1" height="1"/><rect x="53" y="322" width="1" height="1"/><rect x="209" y="292" width="1" height="1"/><rect x="208" y="292" width="1" height="1"/><rect x="47" y="290" width="1" height="1"/><rect x="239" y="269" width="1" height="1"/><rect x="91" y="309" width="1" height="1"/><rect x="243" y="240" width="1" height="1"/><rect x="174" y="308" width="1" height="1"/><rect x="227" y="250" width="1" height="1"/><rect x="181" y="296" width="1" height="1"/><rect x="34" y="305" width="1" height="1"/><rect x="200" y="288" width="1" height="1"/><rect x="245" y="267" width="1" height="1"/><rect x="101" y="262" width="1" height="1"/><rect x="44" y="301" width="1" height="1"/><rect x="202" y="268" width="1" height="1"/><rect x="72" y="306" width="1" height="1"/><rect x="179" y="285" width="1" height="1"/><rect x="237" y="298" width="1" height="1"/><rect x="162" y="283" width="1" height="1"/><rect x="74" y="296" width="1" height="1"/><rect x="11" y="317" width="1" height="1"/><rect x="194" y="256" width="1" height="1"/><rect x="152" y="271" width="1" height="1"/><rect x="20" y="304" width="1" height="1"/><rect x="138" y="286" width="1" height="1"/><rect x="107" y="288" width="1" height="1"/><rect x="249" y="262" width="1" height="1"/><rect x="179" y="283" width="1" height="1"/><rect x="244" y="261" width="1" height="1"/><rect x="259" y="245" width="1" height="1"/><rect x="200" y="252" width="1" height="1"/><rect x="144" y="297" width="1" height="1"/><rect x="190" y="292" width="1" height="1"/><rect x="169" y="275" width="1" height="1"/><rect x="29" y="336" width="1" height="1"/><rect x="231" y="242" width="1" height="1"/><rect x="72" y="285" width="1" height="1"/><rect x="112" y="304" width="1" height="1"/><rect x="106" y="301" width="1" height="1"/><rect x="161" y="293" width="1" height="1"/><rect x="35" y="306" width="1" height="1"/><rect x="6" y="313" width="1" height="1"/><rect x="123" y="315" width="1" height="1"/><rect x="222" y="276" width="1" height="1"/><rect x="83" y="278" width="1" height="1"/><rect x="59" y="298" width="1" height="1"/><rect x="105" y="292" width="1" height="1"/><rect x="185" y="268" width="1" height="1"/><rect x="115" y="277" width="1" height="1"/><rect x="163" y="268" width="1" height="1"/><rect x="201" y="272" width="1" height="1"/><rect x="229" y="262" width="1" height="1"/><rect x="234" y="275" width="1" height="1"/><rect x="175" y="279" width="1" height="1"/><rect x="247" y="271" width="1" height="1"/><rect x="171" y="296" width="1" height="1"/><rect x="141" y="285" width="1" height="1"/><rect x="6" y="335" width="1" height="1"/><rect x="69" y="281" width="1" height="1"/><rect x="105" y="294" width="1" height="1"/><rect x="17" y="332" width="1" height="1"/><rect x="218" y="277" width="1" height="1"/><rect x="186" y="286" width="1" height="1"/><rect x="67" y="302" width="1" height="1"/><rect x="257" y="284" width="1" height="1"/><rect x="86" y="301" width="1" height="1"/><rect x="148" y="282" width="1" height="1"/><rect x="45" y="327" width="1" height="1"/><rect x="173" y="297" width="1" height="1"/><rect x="110" y="296" width="1" height="1"/><rect x="121" y="317" width="1" height="1"/><rect x="149" y="286" width="1" height="1"/><rect x="21" y="323" width="1" height="1"/><rect x="180" y="266" width="1" height="1"/><rect x="94" y="264" width="1" height="1"/><rect x="99" y="275" width="1" height="1"/><rect x="227" y="252" width="1" height="1"/><rect x="32" y="325" width="1" height="1"/><rect x="193" y="274" width="1" height="1"/><rect x="181" y="297" width="1" height="1"/><rect x="224" y="284" width="1" height="1"/><rect x="182" y="301" width="1" height="1"/><rect x="58" y="290" width="1" height="1"/><rect x="116" y="294" width="1" height="1"/><rect x="257" y="248" width="1" height="1"/><rect x="162" y="309" width="1" height="1"/><rect x="90" y="289" width="1" height="1"/><rect x="216" y="267" width="1" height="1"/><rect x="94" y="296" width="1" height="1"/><rect x="227" y="261" width="1" height="1"/><rect x="61" y="292" width="1" height="1"/><rect x="268" y="268" width="1" height="1"/><rect x="272" y="254" width="1" height="1"/><rect x="388" y="274" width="1" height="1"/><rect x="268" y="233" width="1" height="1"/><rect x="351" y="238" width="1" height="1"/><rect x="347" y="247" width="1" height="1"/><rect x="298" y="251" width="1" height="1"/><rect x="307" y="245" width="1" height="1"/><rect x="294" y="248" width="1" height="1"/><rect x="337" y="229" width="1" height="1"/><rect x="370" y="252" width="1" height="1"/><rect x="301" y="272" width="1" height="1"/><rect x="346" y="251" width="1" height="1"/><rect x="311" y="256" width="1" height="1"/><rect x="329" y="276" width="1" height="1"/><rect x="376" y="217" width="1" height="1"/><rect x="299" y="280" width="1" height="1"/><rect x="341" y="234" width="1" height="1"/><rect x="373" y="264" width="1" height="1"/><rect x="357" y="246" width="1" height="1"/><rect x="332" y="287" width="1" height="1"/><rect x="369" y="234" width="1" height="1"/><rect x="386" y="250" width="1" height="1"/><rect x="300" y="277" width="1" height="1"/><rect x="270" y="236" width="1" height="1"/><rect x="311" y="232" width="1" height="1"/><rect x="333" y="262" width="1" height="1"/><rect x="337" y="233" width="1" height="1"/><rect x="320" y="254" width="1" height="1"/><rect x="318" y="247" width="1" height="1"/><rect x="335" y="223" width="1" height="1"/><rect x="289" y="238" width="1" height="1"/><rect x="359" y="284" width="1" height="1"/><rect x="333" y="265" width="1" height="1"/><rect x="294" y="277" width="1" height="1"/><rect x="267" y="284" width="1" height="1"/><rect x="278" y="232" width="1" height="1"/><rect x="281" y="293" width="1" height="1"/><rect x="302" y="282" width="1" height="1"/><rect x="284" y="270" width="1" height="1"/><rect x="382" y="254" width="1" height="1"/><rect x="310" y="258" width="1" height="1"/><rect x="284" y="293" width="1" height="1"/><rect x="291" y="289" width="1" height="1"/><rect x="348" y="232" width="1" height="1"/><rect x="291" y="284" width="1" height="1"/><rect x="351" y="264" width="1" height="1"/><rect x="310" y="244" width="1" height="1"/><rect x="324" y="259" width="1" height="1"/><rect x="266" y="296" width="1" height="1"/><rect x="308" y="235" width="1" height="1"/><rect x="337" y="244" width="1" height="1"/><rect x="325" y="250" width="1" height="1"/><rect x="285" y="260" width="1" height="1"/><rect x="264" y="263" width="1" height="1"/><rect x="370" y="268" width="1" height="1"/><rect x="359" y="248" width="1" height="1"/><rect x="279" y="232" width="1" height="1"/><rect x="264" y="247" width="1" height="1"/><rect x="266" y="281" width="1" height="1"/><rect x="265" y="251" width="1" height="1"/><rect x="285" y="242" width="1" height="1"/><rect x="343" y="232" width="1" height="1"/><rect x="330" y="232" width="1" height="1"/><rect x="334" y="248" width="1" height="1"/><rect x="322" y="265" width="1" height="1"/><rect x="285" y="229" width="1" height="1"/><rect x="375" y="243" width="1" height="1"/><rect x="330" y="240" width="1" height="1"/><rect x="352" y="268" width="1" height="1"/><rect x="378" y="235" width="1" height="1"/><rect x="298" y="276" width="1" height="1"/><rect x="380" y="242" width="1" height="1"/><rect x="371" y="254" width="1" height="1"/><rect x="356" y="252" width="1" height="1"/><rect x="385" y="266" width="1" height="1"/><rect x="390" y="270" width="1" height="1"/><rect x="279" y="267" width="1" height="1"/><rect x="277" y="253" width="1" height="1"/><rect x="296" y="268" width="1" height="1"/><rect x="285" y="286" width="1" height="1"/><rect x="388" y="239" width="1" height="1"/><rect x="350" y="278" width="1" height="1"/><rect x="286" y="251" width="1" height="1"/><rect x="260" y="233" width="1" height="1"/><rect x="303" y="292" width="1" height="1"/><rect x="343" y="269" width="1" height="1"/><rect x="290" y="276" width="1" height="1"/><rect x="371" y="242" width="1" height="1"/><rect x="312" y="275" width="1" height="1"/><rect x="320" y="255" width="1" height="1"/><rect x="386" y="257" width="1" height="1"/><rect x="281" y="257" width="1" height="1"/><rect x="284" y="270" width="1" height="1"/><rect x="386" y="221" width="1" height="1"/><rect x="265" y="286" width="1" height="1"/><rect x="349" y="278" width="1" height="1"/><rect x="308" y="268" width="1" height="1"/><rect x="263" y="234" width="1" height="1"/><rect x="281" y="265" width="1" height="1"/><rect x="277" y="284" width="1" height="1"/><rect x="305" y="271" width="1" height="1"/><rect x="355" y="258" width="1" height="1"/><rect x="372" y="260" width="1" height="1"/><rect x="361" y="250" width="1" height="1"/><rect x="261" y="250" width="1" height="1"/><rect x="338" y="256" width="1" height="1"/><rect x="268" y="271" width="1" height="1"/><rect x="349" y="257" width="1" height="1"/><rect x="319" y="278" width="1" height="1"/><rect x="311" y="254" width="1" height="1"/><rect x="322" y="291" width="1" height="1"/><rect x="266" y="237" width="1" height="1"/><rect x="348" y="230" width="1" height="1"/><rect x="315" y="276" width="1" height="1"/><rect x="318" y="249" width="1" height="1"/><rect x="375" y="216" width="1" height="1"/><rect x="375" y="225" width="1" height="1"/><rect x="278" y="257" width="1" height="1"/><rect x="348" y="250" width="1" height="1"/><rect x="339" y="285" width="1" height="1"/><rect x="304" y="278" width="1" height="1"/><rect x="274" y="273" width="1" height="1"/><rect x="321" y="257" width="1" height="1"/><rect x="266" y="263" width="1" height="1"/><rect x="299" y="255" width="1" height="1"/><rect x="270" y="283" width="1" height="1"/><rect x="302" y="283" width="1" height="1"/><rect x="265" y="241" width="1" height="1"/><rect x="331" y="260" width="1" height="1"/><rect x="332" y="233" width="1" height="1"/><rect x="357" y="244" width="1" height="1"/><rect x="351" y="239" width="1" height="1"/><rect x="272" y="285" width="1" height="1"/><rect x="325" y="248" width="1" height="1"/><rect x="308" y="291" width="1" height="1"/><rect x="339" y="269" width="1" height="1"/><rect x="338" y="274" width="1" height="1"/><rect x="339" y="268" width="1" height="1"/><rect x="344" y="248" width="1" height="1"/><rect x="308" y="249" width="1" height="1"/><rect x="306" y="275" width="1" height="1"/><rect x="370" y="261" width="1" height="1"/><rect x="293" y="234" width="1" height="1"/><rect x="364" y="241" width="1" height="1"/><rect x="275" y="272" width="1" height="1"/><rect x="376" y="233" width="1" height="1"/><rect x="359" y="279" width="1" height="1"/><rect x="306" y="239" width="1" height="1"/><rect x="298" y="245" width="1" height="1"/><rect x="355" y="263" width="1" height="1"/><rect x="364" y="230" width="1" height="1"/><rect x="276" y="282" width="1" height="1"/><rect x="338" y="252" width="1" height="1"/><rect x="338" y="223" width="1" height="1"/><rect x="315" y="290" width="1" height="1"/><rect x="307" y="274" width="1" height="1"/><rect x="276" y="251" width="1" height="1"/><rect x="273" y="258" width="1" height="1"/><rect x="280" y="278" width="1" height="1"/><rect x="384" y="253" width="1" height="1"/><rect x="361" y="241" width="1" height="1"/><rect x="314" y="272" width="1" height="1"/><rect x="350" y="273" width="1" height="1"/><rect x="367" y="227" width="1" height="1"/><rect x="266" y="295" width="1" height="1"/><rect x="300" y="258" width="1" height="1"/><rect x="333" y="275" width="1" height="1"/><rect x="303" y="253" width="1" height="1"/><rect x="331" y="282" width="1" height="1"/><rect x="396" y="267" width="1" height="1"/><rect x="437" y="241" width="1" height="1"/><rect x="406" y="230" width="1" height="1"/><rect x="444" y="216" width="1" height="1"/><rect x="406" y="253" width="1" height="1"/><rect x="390" y="256" width="1" height="1"/><rect x="403" y="253" width="1" height="1"/><rect x="450" y="247" width="1" height="1"/><rect x="400" y="229" width="1" height="1"/><rect x="462" y="226" width="1" height="1"/><rect x="418" y="256" width="1" height="1"/><rect x="448" y="238" width="1" height="1"/><rect x="427" y="241" width="1" height="1"/><rect x="445" y="238" width="1" height="1"/><rect x="402" y="239" width="1" height="1"/><rect x="419" y="215" width="1" height="1"/><rect x="424" y="240" width="1" height="1"/><rect x="415" y="232" width="1" height="1"/><rect x="401" y="271" width="1" height="1"/><rect x="421" y="217" width="1" height="1"/><rect x="391" y="247" width="1" height="1"/><rect x="453" y="219" width="1" height="1"/><rect x="415" y="247" width="1" height="1"/><rect x="426" y="242" width="1" height="1"/><rect x="453" y="264" width="1" height="1"/><rect x="464" y="274" width="1" height="1"/><rect x="465" y="276" width="1" height="1"/><rect x="406" y="226" width="1" height="1"/><rect x="425" y="240" width="1" height="1"/><rect x="462" y="224" width="1" height="1"/><rect x="413" y="240" width="1" height="1"/><rect x="465" y="263" width="1" height="1"/><rect x="396" y="264" width="1" height="1"/><rect x="417" y="214" width="1" height="1"/><rect x="394" y="251" width="1" height="1"/><rect x="422" y="230" width="1" height="1"/><rect x="391" y="242" width="1" height="1"/><rect x="420" y="213" width="1" height="1"/><rect x="414" y="218" width="1" height="1"/><rect x="392" y="215" width="1" height="1"/><rect x="501" y="232" width="1" height="1"/><rect x="488" y="208" width="1" height="1"/><rect x="497" y="236" width="1" height="1"/><rect x="482" y="249" width="1" height="1"/><rect x="499" y="251" width="1" height="1"/><rect x="486" y="243" width="1" height="1"/><rect x="488" y="234" width="1" height="1"/><rect x="496" y="244" width="1" height="1"/></g>
<polyline points="1.9,49.7 3.9,54.7 6.3,65.6 8.8,43.8 10.8,56.7 12.4,64.6 14.4,64.6 17.1,46.8 19.7,58.6 22.1,71.5 24.6,47.8 27.6,50.7 30.6,52.7 32.1,50.7 35.5,77.4 40.0,49.7 44.4,55.7 48.3,54.7 50.3,55.7 52.3,50.7 55.3,68.5 57.8,73.5 63.2,49.7 66.1,58.6 68.5,67.5 70.7,55.7 73.0,68.5 75.0,68.5 79.0,53.7 81.9,63.6 84.3,70.5 86.9,58.6 89.8,61.6 92.8,76.4 95.2,80.4 97.1,76.4 99.7,63.6 101.7,67.5 104.7,58.6 106.6,57.6 109.6,61.6 113.5,62.6 115.1,64.6 117.5,83.3 119.9,63.6 120.0,63.7 122.0,63.7 124.3,79.5 126.9,65.7 129.5,70.6 131.5,66.7 134.8,69.6 137.4,71.6 140.2,89.4 142.7,72.6 145.3,71.6 147.7,73.6 150.6,79.5 153.6,91.4 156.6,81.5 160.5,73.6 163.1,78.5 165.8,73.6 168.4,77.5 171.4,101.2 173.7,76.5 177.3,75.6 181.2,79.5 183.6,75.6 186.2,85.4 188.8,98.3 191.5,83.5 194.7,104.2 198.0,81.5 201.4,79.5 203.0,85.4 205.3,105.2 207.9,83.5 209.9,86.4 211.9,107.2 214.4,86.4 216.8,93.3 219.4,98.3 222.7,90.4 226.7,90.8 232.6,92.3 235.6,96.3 238.1,118.0 240.5,99.3 242.5,106.2 245.5,100.2 248.0,110.6 250.9,97.7 253.9,98.7 256.9,102.6 259.8,103.6 263.2,98.7 265.7,102.6 268.7,123.4 270.7,103.6 272.3,120.4 274.2,128.3 276.6,108.6 279.0,105.6 282.5,110.6 286.5,110.6 289.5,106.6 291.4,108.6 294.4,136.2 296.8,112.5 298.7,126.4 302.3,115.5 304.9,124.4 307.8,114.5 312.2,115.5 316.1,122.4 319.1,125.4 323.0,142.2 326.0,141.2 328.0,142.2 332.9,127.3 335.5,133.3 340.8,125.4 343.8,132.3 345.8,133.3 348.1,131.3 351.7,135.2 354.1,144.1 358.6,133.3 361.6,137.2 364.1,135.2 365.0,135.8 367.0,137.8 369.0,142.7 370.9,140.7 374.9,150.6 377.8,148.6 381.8,142.7 384.8,153.6 389.1,169.4 392.7,151.6 394.6,153.6 397.6,172.3 400.2,152.6 402.5,153.6 405.5,159.5 408.5,171.4 410.8,157.5 413.4,160.5 417.9,182.2 420.3,163.5 422.7,164.4 425.3,170.4 427.2,169.4 430.6,196.1 433.2,176.3 435.1,177.3 438.2,174.8 440.7,178.8 442.7,175.8 445.7,180.7 448.1,177.8 451.6,188.6 454.6,190.6 457.5,193.6 459.5,197.5 461.9,190.6 464.5,197.5 467.0,206.4 469.4,195.6 471.8,200.5 474.3,209.4 477.3,197.5 479.3,201.5 481.6,199.5 484.2,203.5 487.2,212.3 489.5,216.3 492.1,206.4 495.5,215.3 498.0,217.3 501.0,216.3 503.0,218.3 505.3,226.2 507.9,217.3 509.9,222.2 512.9,228.1" fill="none" stroke="#38a2da" stroke-width="1" stroke-linejoin="round"/>
<g font-family="'Liberation Sans','NanumGothic','Noto Sans CJK KR',sans-serif" font-weight="bold" font-size="27" text-anchor="middle" stroke-linejoin="round"><text transform="translate(223.5 361) scale(.97 1.08)" fill="#1c1c1c" stroke="#1c1c1c" stroke-width="1.6">아이언울프</text><text transform="translate(222.5 360) scale(.97 1.08)" fill="#f6ee14" stroke="#f6ee14" stroke-width="1">아이언울프</text></g>
</svg>
<!-- axes -->
<div class="a" style="left:32.0px;top:480px;width:1px;height:2px;background:#555"></div><div class="a" style="left:83.0px;top:480px;width:1px;height:2px;background:#555"></div><div class="a" style="left:134.1px;top:480px;width:1px;height:2px;background:#555"></div><div class="a" style="left:185.1px;top:480px;width:1px;height:2px;background:#555"></div><div class="a" style="left:236.1px;top:480px;width:1px;height:2px;background:#555"></div><div class="a" style="left:287.1px;top:480px;width:1px;height:2px;background:#555"></div><div class="a" style="left:338.2px;top:480px;width:1px;height:2px;background:#555"></div><div class="a" style="left:389.2px;top:480px;width:1px;height:2px;background:#555"></div><div class="a" style="left:440.2px;top:480px;width:1px;height:2px;background:#555"></div><div class="a" style="left:491.3px;top:480px;width:1px;height:2px;background:#555"></div><div class="a" style="left:542.3px;top:480px;width:1px;height:2px;background:#555"></div>
<div class="ax" style="left:32px;top:105px;font-size:7.6px;letter-spacing:-.15px">MB/s</div>
<div class="ax" style="left:534px;top:105px;font-size:7.6px;letter-spacing:-.5px">ms</div>
<div class="ax" style="left:8.5px;top:109px;width:20px;text-align:right">300</div>
<div class="ax" style="left:8.5px;top:170px;width:20px;text-align:right">250</div>
<div class="ax" style="left:8.5px;top:231px;width:20px;text-align:right">200</div>
<div class="ax" style="left:8.5px;top:292px;width:20px;text-align:right">150</div>
<div class="ax" style="left:8.5px;top:353px;width:20px;text-align:right">100</div>
<div class="ax" style="left:8.5px;top:414px;width:20px;text-align:right">50</div>
<div class="ax" style="left:546.5px;top:109px">60</div>
<div class="ax" style="left:546.5px;top:170px">50</div>
<div class="ax" style="left:546.5px;top:231px">40</div>
<div class="ax" style="left:546.5px;top:292px">30</div>
<div class="ax" style="left:546.5px;top:353px">20</div>
<div class="ax" style="left:546.5px;top:414px">10</div>
<div class="ax" style="left:31px;top:481px">0</div>
<div class="ax" style="left:63px;top:481px;width:40px;text-align:center">1400</div>
<div class="ax" style="left:114px;top:481px;width:40px;text-align:center">2800</div>
<div class="ax" style="left:166px;top:481px;width:40px;text-align:center">4200</div>
<div class="ax" style="left:217px;top:481px;width:40px;text-align:center">5600</div>
<div class="ax" style="left:268px;top:481px;width:40px;text-align:center">7000</div>
<div class="ax" style="left:319px;top:481px;width:40px;text-align:center">8400</div>
<div class="ax" style="left:371px;top:481px;width:40px;text-align:center">9800</div>
<div class="ax" style="left:422px;top:481px;width:40px;text-align:center">11200</div>
<div class="ax" style="left:473px;top:481px;width:40px;text-align:center">12600</div>
<div class="ax" style="left:529px;top:481px;letter-spacing:-.6px">14000gB</div>
<!-- right panel -->
<div class="a" style="left:573px;top:99.5px;width:57.5px;height:16.5px;background:#e2dfdf;border:1px solid #1466b8;box-shadow:inset 0 0 0 1px #5a9cd8"></div>
<div class="t" style="left:573px;top:102px;width:57px;text-align:center">시작</div>
<div class="sep" style="top:124px"></div>
<div class="a" style="left:570px;top:129px;width:10px;height:10px;border:1px solid #333;border-radius:50%;background:#fff"></div>
<div class="a" style="left:573px;top:132px;width:4px;height:4px;border-radius:50%;background:#222"></div>
<div class="t" style="left:581px;top:128px">데이터 읽기</div>
<div class="a" style="left:570px;top:142px;width:10px;height:10px;border:1px solid #333;border-radius:50%;background:#fff"></div>
<div class="t" style="left:581px;top:141px">데이터 기록</div>
<div class="sep" style="top:155px"></div>
<div class="cb" style="top:161px"></div>
<div class="t" style="left:581px;top:160px">빠른 검사</div>
<div class="a" style="left:570px;top:176px;width:49px;height:15px;background:#fff;border:1px solid #c4c4c4"></div><div class="a" style="left:608px;top:178px;width:9px;height:11px;background:#f4f4f4;border:1px solid #dcdcdc"></div>
<div class="t" style="left:574px;top:178px;color:#a0a0a0">40</div>
<svg class="a" style="left:609.5px;top:178px" width="6" height="11" viewBox="0 0 6 11"><path d="M1 3.5 L3 1.5 L5 3.5 M1 7.5 L3 9.5 L5 7.5" stroke="#555" fill="none" stroke-width="1"/></svg>
<div class="t" style="left:628px;top:178px">gB</div>
<div class="cb" style="top:199px"></div>
<svg class="a" style="left:571px;top:200px" width="7" height="7" viewBox="0 0 7 7"><path d="M0.8 3.5 L2.8 5.5 L6.3 1.2" stroke="#111" fill="none" stroke-width="1.1"/></svg>
<div class="t" style="left:581px;top:198px">전송 속도</div>
<div class="sep" style="top:209px"></div>
<div class="t" style="left:570px;top:211px">최대</div>
<div class="vb" style="top:223px;color:#38b8f8">114.7 MB/s</div>
<div class="t" style="left:570px;top:236px">최소</div>
<div class="vb" style="top:248px;color:#38b8f8">265.7 MB/s</div>
<div class="t" style="left:570px;top:260px">평균</div>
<div class="vb" style="top:272px;color:#38b8f8">206.6 MB/s</div>
<div class="sep" style="top:289px"></div>
<div class="cb" style="top:295px"></div>
<svg class="a" style="left:571px;top:296px" width="7" height="7" viewBox="0 0 7 7"><path d="M0.8 3.5 L2.8 5.5 L6.3 1.2" stroke="#111" fill="none" stroke-width="1.1"/></svg>
<div class="t" style="left:581px;top:294px">액세스 시간</div>
<div class="vb" style="top:305.5px;color:#f4ec30">14.5 ms</div>
<div class="cb" style="top:321px"></div>
<svg class="a" style="left:571px;top:322px" width="7" height="7" viewBox="0 0 7 7"><path d="M0.8 3.5 L2.8 5.5 L6.3 1.2" stroke="#111" fill="none" stroke-width="1.1"/></svg>
<div class="t" style="left:581px;top:320px">버스트 속도</div>
<div class="vb" style="top:331.7px;color:#fff">346.6 MB/s</div>
<div class="t" style="left:571px;top:345px;letter-spacing:-.5px">CPU 사용량</div>
<div class="vb" style="top:358px;color:#fff">0.9%</div>
<!-- right & bottom edges -->
<div class="a" style="left:648px;top:61px;width:6px;height:439px;background:#e6ebf1"></div>
<div class="a" style="left:654px;top:19px;width:4px;height:484px;background:#f7f8fa"></div>
<div class="a" style="left:0;top:498px;width:658px;height:2px;background:#c4dcf0"></div>
<div class="a" style="left:0;top:500px;width:658px;height:3px;background:#e4eaf0"></div>
<div class="a" style="left:558px;top:495px;font-size:14.5px;color:#a4b4c8;opacity:.75;letter-spacing:.3px">Windows 정품 인증</div>
</body></html>
